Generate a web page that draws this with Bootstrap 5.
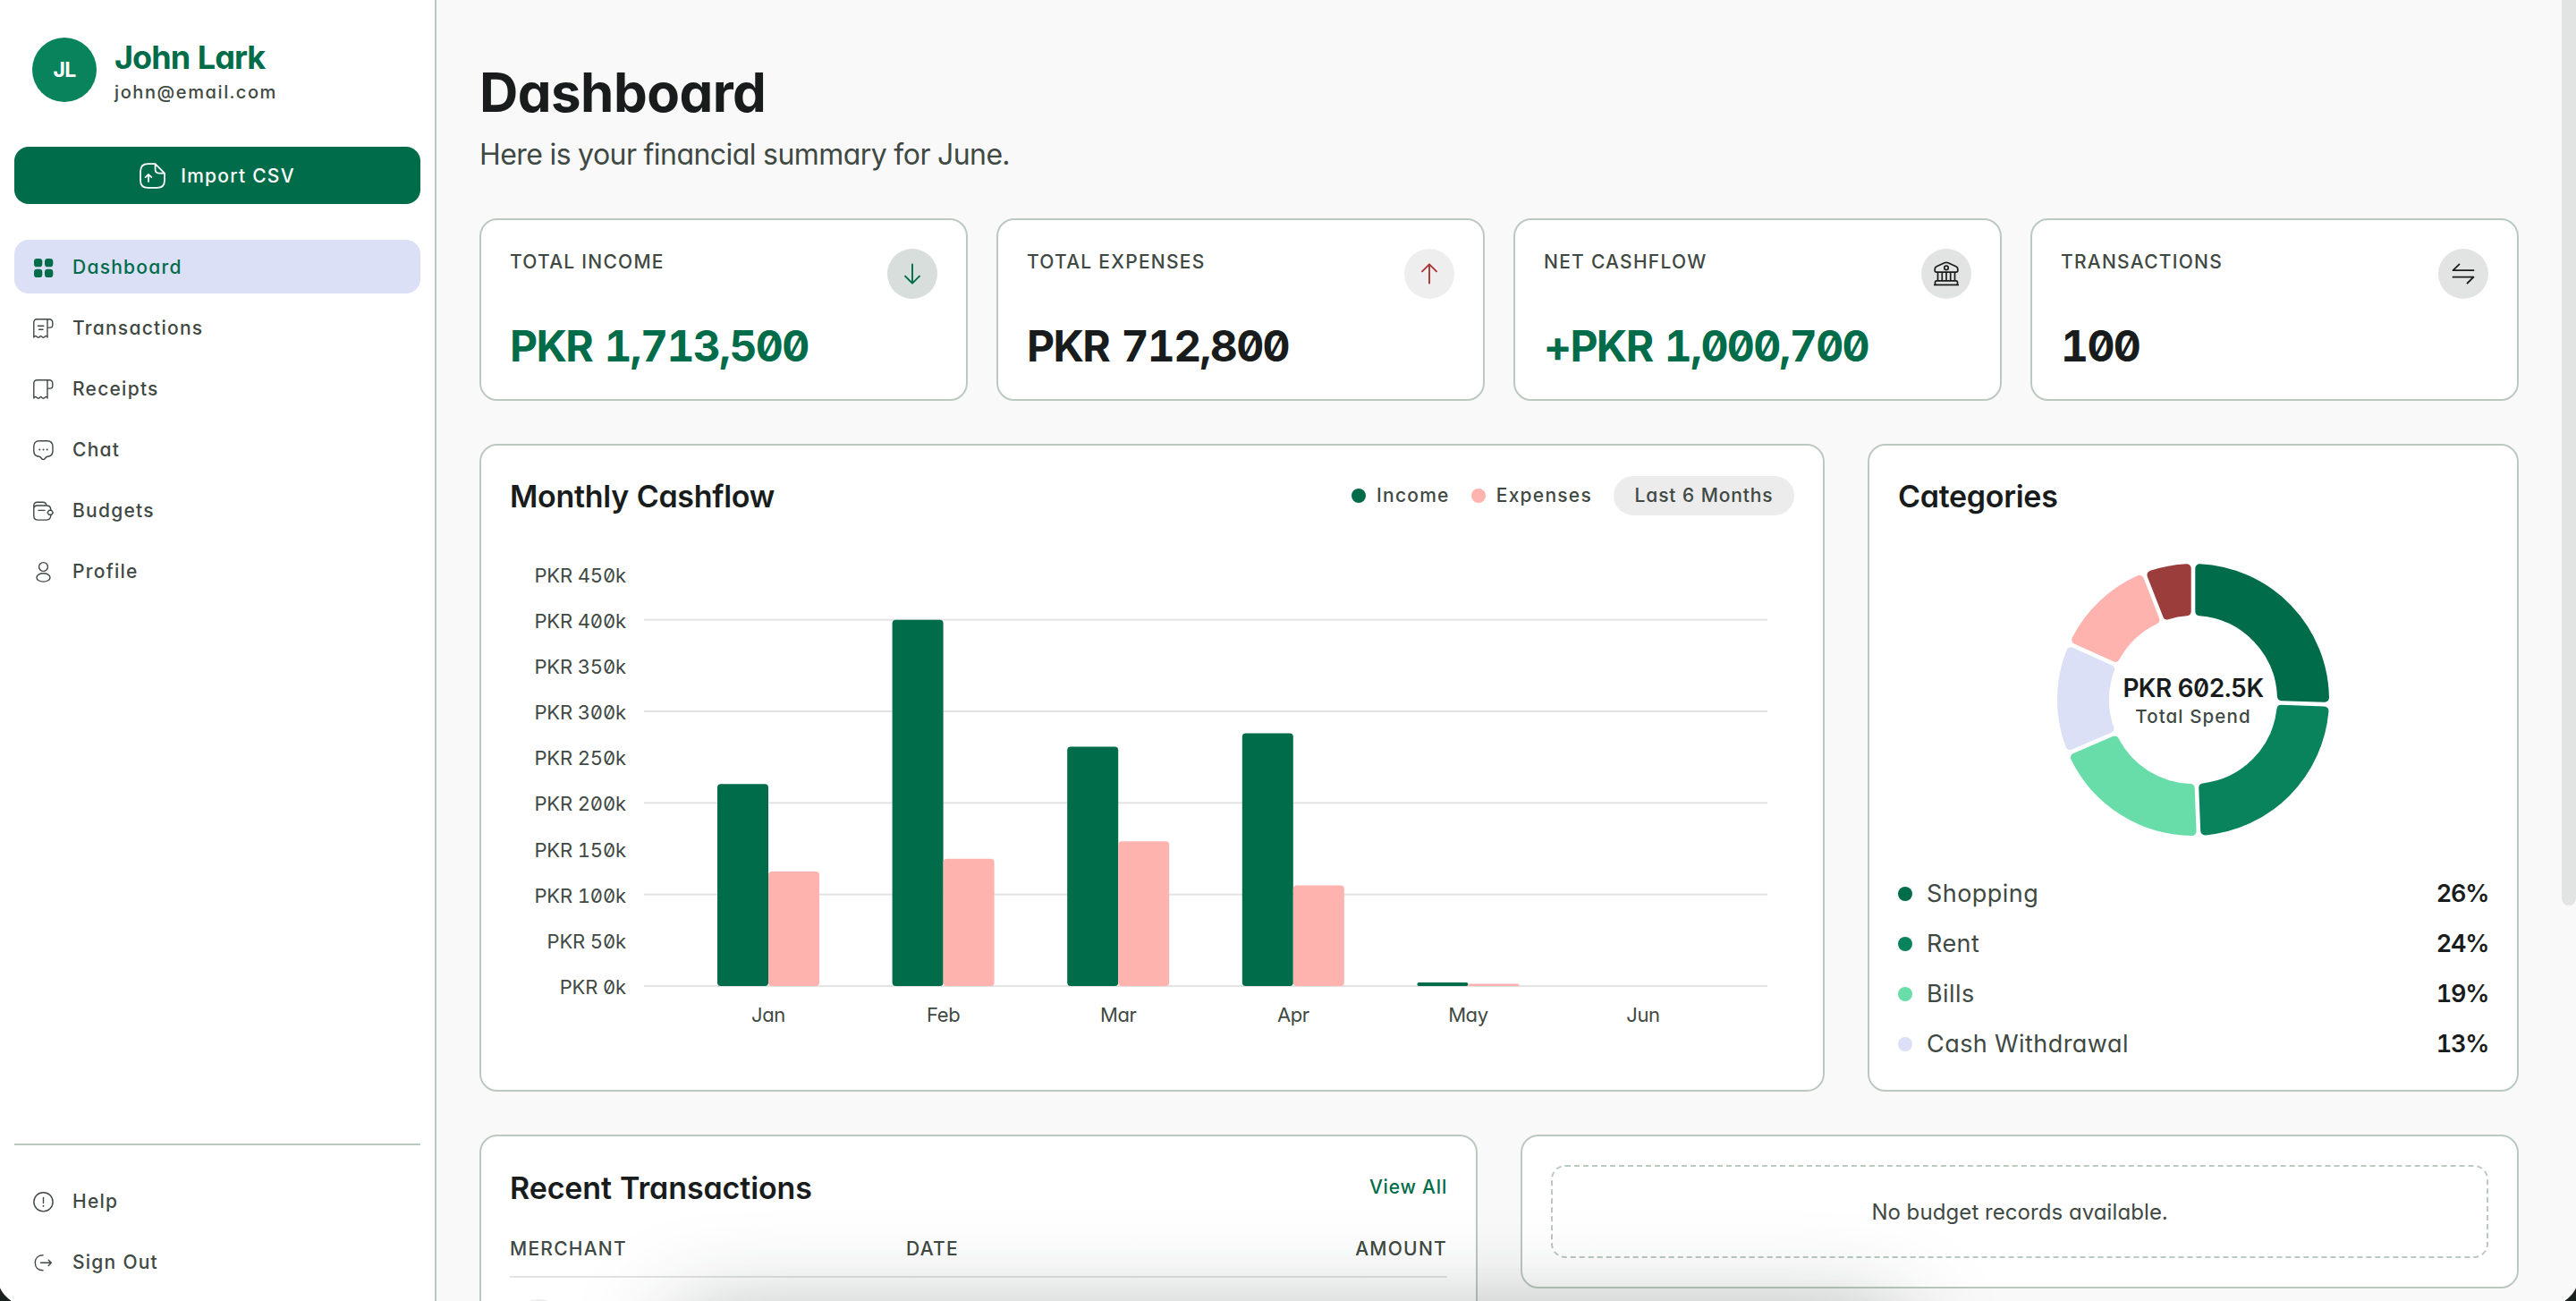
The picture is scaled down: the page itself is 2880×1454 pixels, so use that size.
<!DOCTYPE html>
<html lang="en">
<head>
<meta charset="utf-8">
<title>Dashboard</title>
<meta name="viewport" content="width=device-width, initial-scale=1">
<link rel="stylesheet" href="https://cdn.jsdelivr.net/npm/bootstrap@5.3.0/dist/css/bootstrap.min.css">
<style>
:root{--ink:#191c1c;--soft:#3f4943;--brand:#006c49;--line:#bbc9c0;--rule:#e2e4e3}
body{font-family:Inter,"Liberation Sans",sans-serif;font-feature-settings:"cv11","zero","tnum";background:#f9f9f9;color:var(--ink);height:1454px;overflow:hidden}
svg{display:block;flex:none}
.stroke{fill:none;stroke:currentColor;stroke-linecap:round;stroke-linejoin:round}
.t-soft{color:var(--soft)}
.t-brand{color:var(--brand)}
.tag{font-size:21px;line-height:30px;font-weight:450;letter-spacing:1.25px;white-space:nowrap}
/* sidebar */
.side{width:488px;height:1454px;border-right:2px solid var(--line);padding:42px 16px 14px}
.who{padding-left:20px;gap:20px;height:122px}
.face{width:72px;height:72px;background:#08835c;font-size:23px;letter-spacing:-.8px}
.who-name{font-size:36px;line-height:40px;margin-top:2px;letter-spacing:-.95px}
.who-mail{font-size:20px;line-height:32px;margin-top:3px;letter-spacing:1.6px;font-weight:450}
.btn-import{height:64px;border-radius:16px;background:var(--brand);gap:17px;padding-top:7px}
.menu{gap:8px}
.menu-top{margin-top:40px}
.menu .nav-link{height:60px;border-radius:16px;padding:1px 20px 0;gap:21px;color:var(--soft)}
.menu .nav-link.active{background:#dbe0f6;color:var(--brand)}
.menu-low{border-top:2px solid var(--line);padding-top:32px}
/* content */
.page{padding:67px 64px 0 48px;height:1454px}
.page-title{font-size:60px;line-height:72px;letter-spacing:-.55px}
.page-sub{font-size:32px;line-height:44px;margin:12px 0 49px;letter-spacing:-.54px}
.panel{background:#fff;border:2px solid var(--line);border-radius:20px;padding:32px}
.stats{gap:32px}
.stat{height:204px;flex:1 1 0}
.stat-head{height:28px}
.stat-value{font-size:48px;line-height:56px;letter-spacing:-1.65px;word-spacing:2px;margin-bottom:-1px;white-space:nowrap}
.disc{width:56px;height:56px;background:#e2e4e3}
.panel-title{font-size:34px;line-height:48px;font-weight:600;letter-spacing:-.3px;padding-top:1px}
.row-gap{gap:48px;margin-top:48px}
.chart-panel{width:1504px;height:724px}
.cat-panel{width:728px;height:724px}
.head48{height:48px}
.spot{width:16px;height:16px;border-radius:50%;flex:none}
.pill{width:202px;height:44px;background:#ececec;letter-spacing:.85px}
.ring{margin:52px auto 45px}
.cats{gap:16px;font-size:27px;line-height:40px;letter-spacing:.45px}
.cats b{font-weight:600;letter-spacing:-1.3px}
.half{width:1116px}
.head50{height:50px}
.thead-line{margin-top:29px;padding-bottom:15px;border-bottom:2px solid var(--rule)}
.first-col{width:443px}
.ghost{width:64px;height:64px;background:#ececec;margin-top:24px}
.empty{height:104px;border:2px dashed var(--line);border-radius:16px;font-size:24px;letter-spacing:.1px;padding-top:1px}
/* overlays */
.thumb{top:0;right:0;width:16px;height:1012px;background:#e2e4e3;border-radius:0 0 8px 8px}
.dock{left:755px;top:1474px;width:1370px;height:200px;border-radius:20px;box-shadow:0 0 110px rgba(30,48,40,.38)}
.corner{bottom:0;width:12px;height:22px}
.corner-l{left:0;background:radial-gradient(circle at 32px -8px,transparent 35px,#1a211e 36px)}
.corner-r{right:0;background:radial-gradient(circle at -20px -8px,transparent 35px,#1a211e 36px)}
</style>
</head>
<body>
<div class="d-flex position-relative overflow-hidden">
  <aside class="side bg-white d-flex flex-column flex-shrink-0">
    <div class="who d-flex align-items-start">
      <div class="face rounded-circle text-white fw-bold d-flex align-items-center justify-content-center">JL</div>
      <div>
        <div class="who-name fw-bold t-brand">John Lark</div>
        <div class="who-mail t-soft">john@email.com</div>
      </div>
    </div>
    <button class="btn btn-import tag text-white border-0 d-flex align-items-center justify-content-center w-100">
      <svg class="stroke" width="29" height="29" viewBox="0 0 28.4 28.4" stroke-width="1.7"><path d="M17.2 1H9.4C3.6 1 1 3.600 1 9.400v10c0 5.600 2.600 8 8.200 8h10c5.600 0 8.200-2.400 8.200-8V11.400L17.200 1v6.200c0 2.800 1.400 4.200 4.200 4.200h6M9.800 20.500v-7.700M6.500 15.800l3.300-3.200 3.300 3.200"/></svg>
      Import CSV
    </button>
    <nav class="nav menu menu-top flex-column flex-nowrap">
      <a class="nav-link active tag d-flex align-items-center"><svg width="24" height="24" viewBox="0 0 24 24" fill="currentColor"><rect x="2" y="2" width="9.300" height="9.300" rx="3.400"/><rect x="14" y="2" width="9.300" height="9.300" rx="3.400"/><rect x="2" y="13.800" width="9.300" height="9.300" rx="3.400"/><rect x="14" y="13.800" width="9.300" height="9.300" rx="3.400"/></svg>Dashboard</a>
      <a class="nav-link tag d-flex align-items-center"><svg class="stroke" width="24" height="24" viewBox="0 0 24 24" stroke-width="1.4"><path d="M17 1.800H5.500C3 1.800 1.800 3 1.800 5.500V22q1.500-2.400 3-1 2.200 2.400 4 0 .8-.8 1.600 0 2 2.400 4 0 1.500-1.400 2.600 1ZM17 1.800h1.800c2.600 0 4 1.500 4 4v2.400c0 2-.9 2.900-2.900 2.900H17M6.500 9.300h6.300M7.500 13.300h4.500"/></svg>Transactions</a>
      <a class="nav-link tag d-flex align-items-center"><svg class="stroke" width="24" height="24" viewBox="0 0 24 24" stroke-width="1.4"><path d="M17 1.800H5.500C3 1.800 1.800 3 1.800 5.500V22q1.500-2.400 3-1 2.200 2.400 4 0 .8-.8 1.600 0 2 2.400 4 0 1.500-1.400 2.600 1ZM17 1.800h1.800c2.600 0 4 1.500 4 4v2.400c0 2-.9 2.900-2.900 2.900H17"/></svg>Receipts</a>
      <a class="nav-link tag d-flex align-items-center"><svg class="stroke" width="24" height="24" viewBox="0 0 24 24" stroke-width="1.4"><path d="M8 1.800h8.500C21 1.800 23 4 23 8.200v4.500c0 4.300-2 6.300-6 6.500-2.200.2-2.600 3.400-4.600 3.400s-2.400-3.200-4.600-3.400c-4.200-.2-6-2.200-6-6.500V8.200C1.800 4 3.600 1.800 8 1.800Z"/><path stroke-width="2" d="M8.300 11.400h.01M12.500 11.400h.01M16.700 11.400h.01"/></svg>Chat</a>
      <a class="nav-link tag d-flex align-items-center"><svg class="stroke" width="24" height="24" viewBox="0 0 24 24" stroke-width="1.400"><path d="M20.800 10.800C20.700 7.500 19.200 6 16 6H6C3.200 6 1.800 7.200 1.800 9.500v8c0 3.300 1.400 4.600 4.600 4.600H16c3.300 0 4.700-1.400 4.800-5.300M1.800 9.500V6c0-2.600 1.200-3.700 3.800-3.700h6.200C14.400 2.300 15.600 3.500 16 6M7 11.400h7M18.800 11.300h2.800l1.700 2.500-1.700 2.500h-2.800l-1.700-2.500Z"/></svg>Budgets</a>
      <a class="nav-link tag d-flex align-items-center"><svg class="stroke" width="24" height="24" viewBox="0 0 24 24" stroke-width="1.400"><circle cx="12.500" cy="6.500" r="4.900"/><ellipse cx="12.500" cy="18.400" rx="7.500" ry="4.700"/></svg>Profile</a>
    </nav>
    <nav class="nav menu menu-low flex-column flex-nowrap mt-auto">
      <a class="nav-link tag d-flex align-items-center"><svg class="stroke" width="24" height="24" viewBox="0 0 24 24" stroke-width="1.400"><circle cx="12.500" cy="12.300" r="10.600"/><path d="M12.500 7.500v6"/><path stroke-width="1.900" d="M12.500 16.800v.01"/></svg>Help</a>
      <a class="nav-link tag d-flex align-items-center"><svg class="stroke" width="24" height="24" viewBox="0 0 24 24" stroke-width="1.400"><path d="M12 3.800c-5.600 0-8.700 3.600-8.700 8.500s3.100 8.500 8.700 8.500M9.500 12.300h11.800M18.200 9.200l3.100 3.100-3.100 3.100"/></svg>Sign Out</a>
    </nav>
  </aside>

  <main class="page flex-grow-1">
    <h1 class="page-title fw-bold m-0">Dashboard</h1>
    <p class="page-sub t-soft">Here is your financial summary for June.</p>

    <section class="stats d-flex">
      <div class="stat panel d-flex flex-column justify-content-between">
        <div class="stat-head d-flex justify-content-between"><span class="tag t-soft">TOTAL INCOME</span>
          <span class="disc rounded-circle d-flex align-items-center justify-content-center t-brand" style="background:#d8dedc"><svg class="stroke" width="28" height="28" viewBox="0 0 28 28" stroke-width="1.900"><path d="M14 3.400v21M6 16.700l8 8 8-8"/></svg></span></div>
        <div class="stat-value fw-bold t-brand">PKR 1,713,500</div>
      </div>
      <div class="stat panel d-flex flex-column justify-content-between">
        <div class="stat-head d-flex justify-content-between"><span class="tag t-soft">TOTAL EXPENSES</span>
          <span class="disc rounded-circle d-flex align-items-center justify-content-center" style="background:#eee;color:#a93633"><svg class="stroke" width="28" height="28" viewBox="0 0 28 28" stroke-width="1.900"><path d="M14 24.600v-21M6 11.300l8-8 8 8"/></svg></span></div>
        <div class="stat-value fw-bold">PKR 712,800</div>
      </div>
      <div class="stat panel d-flex flex-column justify-content-between">
        <div class="stat-head d-flex justify-content-between"><span class="tag t-soft">NET CASHFLOW</span>
          <span class="disc rounded-circle d-flex align-items-center justify-content-center"><svg class="stroke" width="28" height="28" viewBox="0 0 28 28" stroke-width="1.700"><path d="M1.200 8.500c0-1.500.6-2.100 2-2.800l8.800-4c1.500-.6 2.500-.6 4 0l8.800 4c1.400.7 2 1.300 2 2.800v1.800c0 1.200-.6 1.800-1.800 1.800H3c-1.200 0-1.800-.6-1.800-1.800ZM4.500 12.100v9.700M9.300 12.100v9.700M14 12.100v9.700M18.700 12.100v9.700M23.500 12.100v9.700M1.500 26.200v-2.600c0-1.200.6-1.800 1.800-1.800h21.400c1.200 0 1.800.6 1.800 1.800v2.600M.5 26.400h27"/><circle cx="14" cy="7.400" r="2.200"/></svg></span></div>
        <div class="stat-value fw-bold t-brand">+PKR 1,000,700</div>
      </div>
      <div class="stat panel d-flex flex-column justify-content-between">
        <div class="stat-head d-flex justify-content-between"><span class="tag t-soft">TRANSACTIONS</span>
          <span class="disc rounded-circle d-flex align-items-center justify-content-center"><svg class="stroke" width="28" height="28" viewBox="0 0 28 28" stroke-width="1.800"><path d="M25.500 10.200h-23l7-6.800M2.500 17.700h23l-7 6.800"/></svg></span></div>
        <div class="stat-value fw-bold">100</div>
      </div>
    </section>

    <section class="d-flex row-gap">
      <div class="panel chart-panel">
        <div class="head48 d-flex align-items-center justify-content-between">
          <h2 class="panel-title m-0">Monthly Cashflow</h2>
          <div class="d-flex align-items-center gap-4 tag t-soft">
            <span class="d-flex align-items-center" style="gap:12px"><i class="spot" style="background:#006c49"></i>Income</span>
            <span class="d-flex align-items-center" style="gap:12px"><i class="spot" style="background:#ffb3ae"></i>Expenses</span>
            <span class="pill rounded-pill d-flex align-items-center justify-content-center">Last 6 Months</span>
          </div>
        </div>
        <svg id="bars" width="1436" height="608" viewBox="570 578 1436 608" font-size="22" fill="#3f4943"></svg>
      </div>
      <div class="panel cat-panel">
        <div class="head48 d-flex align-items-center"><h2 class="panel-title m-0">Categories</h2></div>
        <svg id="ring" class="ring" width="304" height="304" viewBox="-152 -152 304 304" text-anchor="middle"></svg>
        <div class="cats d-flex flex-column">
          <div class="d-flex align-items-center gap-3"><i class="spot" style="background:#006c49"></i><span class="t-soft flex-grow-1">Shopping</span><b>26%</b></div>
          <div class="d-flex align-items-center gap-3"><i class="spot" style="background:#08835c"></i><span class="t-soft flex-grow-1">Rent</span><b>24%</b></div>
          <div class="d-flex align-items-center gap-3"><i class="spot" style="background:#68dda9"></i><span class="t-soft flex-grow-1">Bills</span><b>19%</b></div>
          <div class="d-flex align-items-center gap-3"><i class="spot" style="background:#dbe0f6"></i><span class="t-soft flex-grow-1">Cash Withdrawal</span><b>13%</b></div>
        </div>
      </div>
    </section>

    <section class="d-flex align-items-start row-gap">
      <div class="panel half">
        <div class="head50 d-flex align-items-center justify-content-between">
          <h2 class="panel-title m-0" style="letter-spacing:-.1px">Recent Transactions</h2>
          <a class="tag t-brand text-decoration-none" style="letter-spacing:.8px">View All</a>
        </div>
        <div class="thead-line d-flex tag t-soft"><span class="first-col">MERCHANT</span><span class="flex-grow-1">DATE</span><span>AMOUNT</span></div>
        <div class="ghost rounded-circle"></div>
      </div>
      <div class="panel half">
        <div class="empty d-flex align-items-center justify-content-center t-soft">No budget records available.</div>
      </div>
    </section>
  </main>

  <div class="thumb position-absolute"></div>
  <div class="dock position-absolute"></div>
  <div class="corner corner-l position-absolute"></div>
  <div class="corner corner-r position-absolute"></div>
</div>
<script src="https://cdn.jsdelivr.net/npm/bootstrap@5.3.0/dist/js/bootstrap.bundle.min.js"></script>
<script>
// Monthly cashflow: 0k sits at y=1102, one thousand is 1.023px
const base = 1102, k = 1.0233;
let out = '';
for (let v = 0; v <= 400; v += 100) out += `<rect x="720" y="${base - v * k - 1}" width="1256" height="2" fill="#e2e4e3"/>`;
for (let v = 0; v <= 450; v += 50) out += `<text x="700" y="${1111 - v * k}" text-anchor="end" letter-spacing="-.15">PKR ${v}k</text>`;
[['Jan', 220.5, 125], ['Feb', 400, 139], ['Mar', 261.5, 158], ['Apr', 276, 110], ['May', 4, 2.5], ['Jun', 0, 0]].forEach(([m, inc, exp], i) => {
  const x = 859 + i * 195.6;
  [[x - 57, inc, '#006c49'], [x, exp, '#ffb3ae']].forEach(([bx, v, c]) => {
    if (v) out += `<rect x="${bx}" y="${base - v * k}" width="57" height="${v * k}" rx="${Math.min(4, v * k / 2)}" fill="${c}"/>`;
  });
  out += `<text x="${x}" y="1142" text-anchor="middle" letter-spacing="-.4">${m}</text>`;
});
document.getElementById('bars').innerHTML = out;

// Category ring: segments inset by 5px and outlined with a 10px round join
const R = 147, r = 99, gap = 7.3;
const pt = (rad, ang) => [(rad * Math.sin(ang)).toFixed(2), (-rad * Math.cos(ang)).toFixed(2)].join(' ');
const segs = [[0, 92, '#006c49'], [92, 177.7, '#08835c'], [177.7, 246.8, '#68dda9'], [246.8, 294.3, '#dbe0f6'], [294.3, 338.7, '#ffb3ae'], [338.7, 360, '#9b3e3b']];
document.getElementById('ring').innerHTML = segs.map(([a, b, c]) => {
  const A = a * Math.PI / 180, B = b * Math.PI / 180, o = Math.asin(gap / R), n = Math.asin(gap / r);
  return `<path fill="${c}" stroke="${c}" stroke-width="10" stroke-linejoin="round" d="M${pt(R, A + o)}A${R} ${R} 0 0 1 ${pt(R, B - o)}L${pt(r, B - n)}A${r} ${r} 0 0 0 ${pt(r, A + n)}Z"/>`;
}).join('') + '<text y="-3.300" font-size="28" font-weight="600" letter-spacing="-.6" fill="#191c1c">PKR 602.5K</text><text y="26" font-size="20.500" font-weight="450" letter-spacing="1.100" fill="#3f4943">Total Spend</text>';
</script>
</body>
</html>
